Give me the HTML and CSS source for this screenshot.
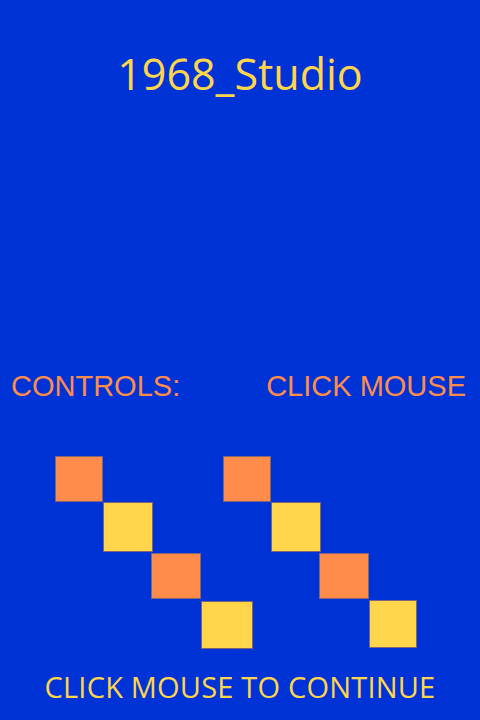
FILE: index.html
```html
<!DOCTYPE html>
<html>
<head>
<meta charset="utf-8">
<link rel="stylesheet" href="styles.css">
</head>
<body>
<main class="screen">
  <h1 class="title">1968_Studio</h1>
  <div class="controls">
    <span class="controls-label">CONTROLS:</span>
    <span class="controls-value">CLICK MOUSE</span>
  </div>
  <div class="board">
    <div class="sq orange" style="left:55px;top:0;width:48px;height:46px"></div>
    <div class="sq yellow" style="left:103px;top:46px;width:50px;height:50px"></div>
    <div class="sq orange" style="left:151px;top:97px;width:50px;height:46px"></div>
    <div class="sq yellow" style="left:201px;top:145px;width:52px;height:48px"></div>
    <div class="sq orange" style="left:223px;top:0;width:48px;height:46px"></div>
    <div class="sq yellow" style="left:271px;top:46px;width:50px;height:50px"></div>
    <div class="sq orange" style="left:319px;top:97px;width:50px;height:46px"></div>
    <div class="sq yellow" style="left:369px;top:144px;width:48px;height:48px"></div>
  </div>
  <p class="footer">CLICK MOUSE TO CONTINUE</p>
</main>
</body>
</html>
```

FILE: styles.css
```css
html, body {
  margin: 0;
  padding: 0;
  background: #0033d6;
}
.screen {
  width: 480px;
  height: 720px;
  display: flex;
  flex-direction: column;
  background: #0033d6;
}
.title {
  margin: 50px 0 0;
  text-align: center;
  font-family: "Open Sans", "Noto Sans", sans-serif;
  font-weight: 400;
  font-size: 43px;
  line-height: 48px;
  color: #ffd54b;
}
.controls {
  margin-top: 271px;
  display: flex;
  justify-content: space-between;
  padding: 0 14px 0 11px;
  font-family: "Liberation Sans", Arial, sans-serif;
  font-size: 29px;
  line-height: 34px;
  color: #ff8c4a;
}
.board {
  position: relative;
  height: 193px;
  margin-top: 53px;
}
.sq {
  position: absolute;
  box-sizing: border-box;
  border: 1px solid #7d6478;
}
.orange { background: #ff8c4a; }
.yellow { background: #ffd54b; }
.footer {
  margin: 20px 0 0;
  text-align: center;
  font-family: "Open Sans", "Noto Sans", sans-serif;
  font-size: 29px;
  letter-spacing: 0.2px;
  line-height: 36px;
  color: #ffd54b;
}
```
